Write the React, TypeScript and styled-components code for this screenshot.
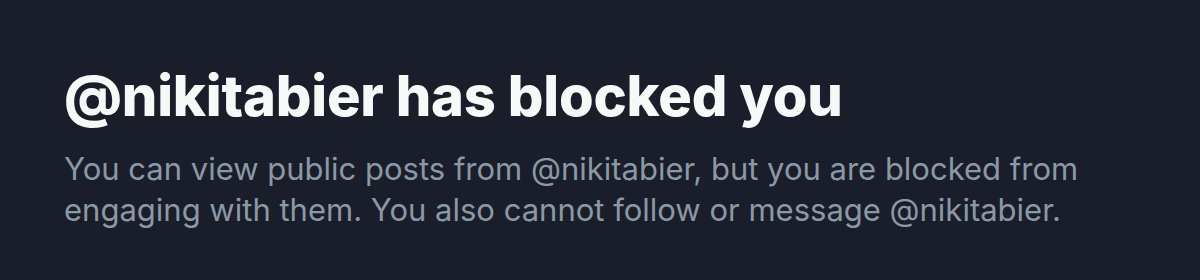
import React from "react";
import styled, { createGlobalStyle } from "styled-components";

const Global = createGlobalStyle`
  html, body { margin: 0; padding: 0; background: #1a1e2a; }
`;

const Page = styled.div`
  width: 1200px;
  height: 280px;
  box-sizing: border-box;
  background: #1a1e2a;
  padding: 64px 64px 0 64px;
  font-family: "Inter", "Noto Sans", sans-serif;
  display: flex;
  flex-direction: column;
`;

const Title = styled.h1`
  margin: 0;
  color: #f7f9f9;
  font-size: 56px;
  font-weight: 800;
  line-height: 64px;
  letter-spacing: -0.2px;
`;

const Body = styled.p`
  margin: 20px 0 0 0;
  color: #8b98a5;
  font-size: 31px;
  font-weight: 400;
  line-height: 41px;
  max-width: 1080px;
`;

export default function App() {
  return (
    <>
      <Global />
      <Page>
        <Title>@nikitabier has blocked you</Title>
        <Body>
          You can view public posts from @nikitabier, but you are blocked from engaging with them. You also cannot follow or message @nikitabier.
        </Body>
      </Page>
    </>
  );
}
